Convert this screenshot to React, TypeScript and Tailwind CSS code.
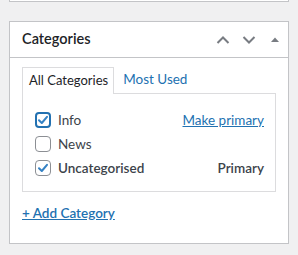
import React from "react";

type Row = {
  label: string;
  checked: boolean;
  focused?: boolean;
  bold?: boolean;
  right?: "make" | "primary";
};

const rows: Row[] = [
  { label: "Info", checked: true, focused: true, right: "make" },
  { label: "News", checked: false },
  { label: "Uncategorised", checked: true, bold: true, right: "primary" },
];

function Checkbox({ checked, focused }: { checked: boolean; focused?: boolean }) {
  return (
    <div
      className={
        focused
          ? "w-4 h-4 rounded-[4px] border-2 border-[#2271b1] bg-white flex items-center justify-center"
          : "w-4 h-4 rounded-[4px] border border-[#8c8f94] bg-white flex items-center justify-center"
      }
    >
      {checked && (
        <svg width="12" height="12" viewBox="0 0 12 12">
          <path
            d="M2 6.2 L4.8 9 L10 2.8"
            fill="none"
            stroke="#3582c4"
            strokeWidth="2"
            strokeLinecap="round"
            strokeLinejoin="round"
          />
        </svg>
      )}
    </div>
  );
}

export default function App() {
  return (
    <div
      className="w-[298px] h-[255px] bg-[#f0f0f1] overflow-hidden text-[13.5px] text-[#3c434a]"
      style={{ fontFamily: 'Lato, "Noto Sans", sans-serif' }}
    >
      <div className="ml-[9px] w-[280px] h-[2px] bg-white border-b border-x border-[#c3c4c7]" />

      <div className="ml-[9px] mt-[19px] w-[280px] h-[223px] bg-white border border-[#c3c4c7]">
        <div className="h-[36px] border-b border-[#c3c4c7] flex items-center pl-[12px] pr-[9px]">
          <h2 className="text-[14.5px] font-semibold text-[#1d2327] flex-1 leading-none">Categories</h2>
          <div className="flex items-center gap-[12px] text-[#787c82]">
            <svg width="14" height="10" viewBox="0 0 14 10">
              <path d="M1.5 8 L7 2.5 L12.5 8" fill="none" stroke="#787c82" strokeWidth="2" />
            </svg>
            <svg width="14" height="10" viewBox="0 0 14 10">
              <path d="M1.5 2 L7 7.5 L12.5 2" fill="none" stroke="#787c82" strokeWidth="2" />
            </svg>
            <svg width="8" height="10" viewBox="0 0 8 10" className="ml-[3px]">
              <path d="M0 7 L4 2.5 L8 7 Z" fill="#787c82" />
            </svg>
          </div>
        </div>

        <div className="px-[12px] pt-[8px]">
          <div className="flex items-end">
            <div className="h-[27px] pl-[6px] pr-[5px] border border-b-0 border-[#dcdcde] bg-white -mb-px relative z-10 flex items-center text-[13px] text-[#1d2327]">
              All Categories
            </div>
            <div className="h-[27px] px-[9px] flex items-center text-[#2271b1]">Most Used</div>
          </div>
          <div className="border border-[#dcdcde] pt-[14px] pb-[11px] pl-[12px] pr-[11px]">
            {rows.map((row) => (
              <div key={row.label} className="h-[24px] flex items-center">
                <Checkbox checked={row.checked} focused={row.focused} />
                <span
                  className={
                    row.bold
                      ? "ml-[7px] flex-1 font-semibold text-[#3c434a]"
                      : "ml-[7px] flex-1 text-[#3c434a]"
                  }
                >
                  {row.label}
                </span>
                {row.right === "make" && (
                  <a className="text-[#2271b1] underline">Make primary</a>
                )}
                {row.right === "primary" && (
                  <span className="font-semibold text-[#3c434a]">Primary</span>
                )}
              </div>
            ))}
          </div>
          <div className="mt-[11px] leading-[20px]">
            <a className="text-[#2271b1] underline font-semibold">+ Add Category</a>
          </div>
        </div>
      </div>
    </div>
  );
}
